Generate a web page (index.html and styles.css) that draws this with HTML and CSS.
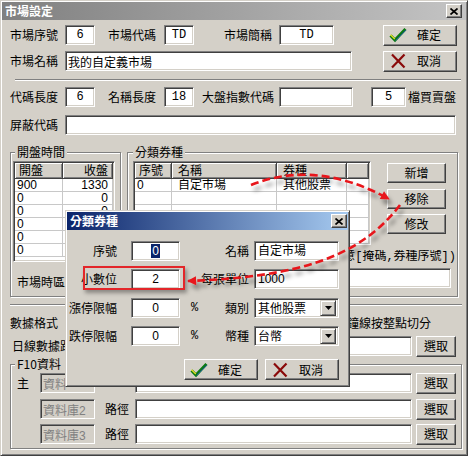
FILE: index.html
```html
<!DOCTYPE html>
<html>

<head>
    <title>市場設定</title>
    <meta charset='utf-8' />
    <link rel="stylesheet" href="styles.css">
</head>

<body>
    <div class="win">
        <div class="cap">
            <span>市場設定</span>
            <span class="xbtn"><svg width="8" height="7" viewBox="0 0 8 7"><path d="M0.5 0.5L7.5 6.5M7.5 0.5L0.5 6.5" stroke="#000" stroke-width="1.7"/></svg></span>
        </div>

        <div class="main">
            <div class="row row1">
                <span class="lbl lbl-a">市場序號</span>
                <input class="fld ctr mono f-s" value="6">
                <span class="lbl lbl-b">市場代碼</span>
                <input class="fld ctr mono f-s" value="TD">
                <span class="lbl lbl-c">市場簡稱</span>
                <input class="fld ctr mono f-abbr" value="TD">
                <button class="btn btn-ico btn-top">
                    <svg class="ico" width="18" height="16" viewBox="0 0 18 16"><path d="M1.5 8.5L6 13L16.5 2" fill="none" stroke="#0b7a12" stroke-width="3"/><path d="M1.5 7.8L5.8 12" stroke="#e8e020" stroke-width="1.2"/><path d="M6.5 13.5L16.8 3" stroke="#2050c0" stroke-width="0.8"/></svg>
                    <span>確定</span>
                </button>
            </div>
            <div class="row row2">
                <span class="lbl lbl-a">市場名稱</span>
                <input class="fld f-name" value="我的自定義市場">
                <button class="btn btn-ico btn-top2">
                    <svg class="ico" width="18" height="16" viewBox="0 0 18 16"><path d="M3 1.5L15.5 14.5M15.5 1.5L3 14.5" stroke="#8a0a0a" stroke-width="2.2"/></svg>
                    <span>取消</span>
                </button>
            </div>

            <div class="sep sep-top"></div>

            <div class="row row3">
                <span class="lbl lbl-a">代碼長度</span>
                <input class="fld ctr mono f-s" value="6">
                <span class="lbl lbl-b">名稱長度</span>
                <input class="fld ctr mono f-s" value="18">
                <span class="lbl lbl-d">大盤指數代碼</span>
                <input class="fld f-index" value="">
                <input class="fld ctr mono f-depth" value="5">
                <span class="lbl lbl-e">檔買賣盤</span>
            </div>
            <div class="row row4">
                <span class="lbl lbl-a">屏蔽代碼</span>
                <input class="fld f-mask" value="">
            </div>

            <div class="groups">
                <div class="grp g-open">
                    <span class="legend">開盤時間</span>
                    <div class="lv lv-open">
                        <div class="lh"><span class="hd c-o">開盤</span><span class="hd c-c rt">收盤</span></div>
                        <div class="lr"><span class="lc c-o">900</span><span class="lc c-c rt">1330</span></div>
                        <div class="lr"><span class="lc c-o">0</span><span class="lc c-c rt">0</span></div>
                        <div class="lr"><span class="lc c-o">0</span><span class="lc c-c rt">0</span></div>
                        <div class="lr"><span class="lc c-o">0</span><span class="lc c-c"></span></div>
                        <div class="lr"><span class="lc c-o">0</span><span class="lc c-c"></span></div>
                        <div class="lr"><span class="lc c-o">0</span><span class="lc c-c"></span></div>
                    </div>
                    <span class="lbl tz">市場時區</span>
                </div>

                <div class="grp g-type">
                    <span class="legend">分類券種</span>
                    <div class="g-top">
                        <div class="lv lv-type">
                            <div class="lh"><span class="hd c-no">序號</span><span class="hd c-nm">名稱</span><span class="hd c-kd">券種</span><span class="hd c-fill"></span></div>
                            <div class="lr"><span class="lc c-no">0</span><span class="lc c-nm">自定市場</span><span class="lc c-kd">其他股票</span><span class="lc c-fill"></span></div>
                            <div class="lr"><span class="lc c-no"></span><span class="lc c-nm"></span><span class="lc c-kd"></span><span class="lc c-fill"></span></div>
                            <div class="lr"><span class="lc c-no"></span><span class="lc c-nm"></span><span class="lc c-kd"></span><span class="lc c-fill"></span></div>
                            <div class="lr"><span class="lc c-no"></span><span class="lc c-nm"></span><span class="lc c-kd"></span><span class="lc c-fill"></span></div>
                            <div class="lr"><span class="lc c-no"></span><span class="lc c-nm"></span><span class="lc c-kd"></span><span class="lc c-fill"></span></div>
                        </div>
                        <div class="side">
                            <button class="btn btn-side">新增</button>
                            <button class="btn btn-side">移除</button>
                            <button class="btn btn-side">修改</button>
                        </div>
                    </div>
                    <div class="note">意[掩碼,券種序號])</div>
                    <input class="fld f-rule" value="">
                </div>
            </div>

            <div class="sep sep-mid"></div>

            <div class="row row-fmt">
                <span class="lbl">數據格式</span>
                <span class="lbl chk-txt">鐘線按整點切分</span>
            </div>
            <div class="row row-day">
                <span class="lbl lbl-day">日線數據路</span>
                <input class="fld f-path" value="">
                <button class="btn btn-pick">選取</button>
            </div>

            <div class="grp g-f10">
                <span class="legend">F10資料</span>
                <div class="row f10-row">
                    <span class="lbl lbl-main">主</span>
                    <input class="fld f-db" value="資料" disabled>
                    <span class="lbl lbl-path"></span>
                    <input class="fld f-dbpath" value="">
                    <button class="btn btn-pick">選取</button>
                </div>
                <div class="row f10-row">
                    <span class="lbl lbl-main"></span>
                    <input class="fld f-db" value="資料庫2" disabled>
                    <span class="lbl lbl-path">路徑</span>
                    <input class="fld f-dbpath" value="">
                    <button class="btn btn-pick">選取</button>
                </div>
                <div class="row f10-row">
                    <span class="lbl lbl-main"></span>
                    <input class="fld f-db" value="資料庫3" disabled>
                    <span class="lbl lbl-path">路徑</span>
                    <input class="fld f-dbpath" value="">
                    <button class="btn btn-pick">選取</button>
                </div>
            </div>
        </div>

        <!-- 彈出視窗：分類券種 -->
        <div class="dlg">
            <div class="cap cap-active">
                <span>分類券種</span>
                <span class="xbtn"><svg width="8" height="7" viewBox="0 0 8 7"><path d="M0.5 0.5L7.5 6.5M7.5 0.5L0.5 6.5" stroke="#000" stroke-width="1.7"/></svg></span>
            </div>
            <div class="drow d1">
                <span class="dl1">序號</span>
                <div class="fld dfld ctr"><span class="sel">0</span></div>
                <div class="mid"><span class="dl2">名稱</span></div>
                <div class="fld dwide">自定市場</div>
            </div>
            <div class="drow d2">
                <span class="dl1">小數位</span>
                <div class="fld dfld ctr">2</div>
                <div class="mid"><span class="dl2">每張單位</span></div>
                <div class="fld dwide">1000</div>
            </div>
            <div class="drow d3">
                <span class="dl1">漲停限幅</span>
                <div class="fld dfld ctr">0</div>
                <div class="mid"><span class="pct">%</span><span class="dl2">類別</span></div>
                <div class="fld dwide combo"><span>其他股票</span><span class="drop"><svg width="7" height="4" viewBox="0 0 7 4"><path d="M0 0H7L3.5 4z"/></svg></span></div>
            </div>
            <div class="drow d4">
                <span class="dl1">跌停限幅</span>
                <div class="fld dfld ctr">0</div>
                <div class="mid"><span class="pct">%</span><span class="dl2">幣種</span></div>
                <div class="fld dwide combo"><span>台幣</span><span class="drop"><svg width="7" height="4" viewBox="0 0 7 4"><path d="M0 0H7L3.5 4z"/></svg></span></div>
            </div>
            <div class="dbtns">
                <button class="btn btn-ico dbtn-ok">
                    <svg class="ico" width="18" height="16" viewBox="0 0 18 16"><path d="M1.5 8.5L6 13L16.5 2" fill="none" stroke="#0b7a12" stroke-width="3"/><path d="M1.5 7.8L5.8 12" stroke="#e8e020" stroke-width="1.2"/><path d="M6.5 13.5L16.8 3" stroke="#2050c0" stroke-width="0.8"/></svg>
                    <span>確定</span>
                </button>
                <button class="btn btn-ico dbtn-no">
                    <svg class="ico" width="18" height="16" viewBox="0 0 18 16"><path d="M3 1.5L15.5 14.5M15.5 1.5L3 14.5" stroke="#8a0a0a" stroke-width="2.2"/></svg>
                    <span>取消</span>
                </button>
            </div>
        </div>

        <!-- 標註 -->
        <div class="mark"></div>
        <svg class="arrows" width="468" height="456" viewBox="0 0 468 456">
            <defs>
                <filter id="sh" x="-20%" y="-50%" width="140%" height="200%">
                    <feDropShadow dx="3" dy="5" stdDeviation="2.2" flood-color="#000" flood-opacity="0.4"/>
                </filter>
                <marker id="ah" viewBox="0 0 10 10" refX="9" refY="5" markerWidth="10" markerHeight="9" markerUnits="userSpaceOnUse" orient="auto">
                    <path d="M0 0L10 5L0 10z" fill="#e8161b"/>
                </marker>
            </defs>
            <g filter="url(#sh)" fill="none" stroke="#e8161b" stroke-width="2.6" stroke-dasharray="8 4">
                <path d="M250 184Q315 158 388 198" marker-end="url(#ah)"/>
                <path d="M399 204C360 255 300 276 187 280" marker-end="url(#ah)"/>
            </g>
        </svg>
    </div>
</body>

</html>
```

FILE: styles.css
```css
* {
    box-sizing: border-box;
}

body {
    margin: 0;
    background: #d4d0c8;
    font: 12px/14px "Noto Sans CJK TC", "Liberation Sans", sans-serif;
    color: #000;
}

/* 視窗外框 */
.win {
    position: relative;
    width: 468px;
    height: 456px;
    border: 1px solid;
    border-color: #d4d0c8 #404040 #404040 #d4d0c8;
    box-shadow: inset 1px 1px #fff, inset -1px -1px #808080;
    padding: 1px;
    background: #d4d0c8;
    overflow: hidden;
}

.cap {
    display: flex;
    align-items: center;
    height: 18px;
    padding: 0 4px 0 3px;
    background: linear-gradient(to right, #808080, #c4c4c4);
    color: #fff;
    font-weight: bold;
}

.cap-active {
    background: linear-gradient(to right, #0a246a, #a6caf0);
    padding-right: 1px;
}

.xbtn {
    margin-left: auto;
    width: 16px;
    height: 14px;
    display: flex;
    align-items: center;
    justify-content: center;
    background: #d4d0c8;
    border: 1px solid;
    border-color: #fff #404040 #404040 #fff;
    box-shadow: inset -1px -1px #808080;
}

.main {
    padding: 5px 0 0 8px;
}

.row {
    display: flex;
    align-items: center;
    height: 20px;
}

.lbl {
    flex: none;
    white-space: nowrap;
}

/* 輸入框 */
.fld {
    flex: none;
    height: 20px;
    margin: 0;
    padding: 0 2px;
    border: 1px solid;
    border-color: #808080 #fff #fff #808080;
    box-shadow: inset 1px 1px #404040, inset -1px -1px #d4d0c8;
    background: #fff;
    font: 12px/18px "Liberation Sans", "Noto Sans CJK TC", sans-serif;
    color: #000;
    outline: none;
}

.fld:disabled {
    background: #d4d0c8;
    color: #808080;
}

.ctr {
    text-align: center;
    padding: 0;
}

.mono {
    font-family: "Liberation Mono", monospace;
}

.btn {
    flex: none;
    height: 20px;
    margin: 0;
    padding: 0;
    display: flex;
    align-items: center;
    justify-content: center;
    border: 1px solid;
    border-color: #fff #404040 #404040 #fff;
    box-shadow: inset -1px -1px #808080;
    background: #d4d0c8;
    font: 12px/14px "Noto Sans CJK TC", sans-serif;
    color: #000;
}

.btn-ico {
    justify-content: flex-start;
    padding-left: 5px;
    width: 74px;
    height: 21px;
}

.btn-ico span {
    margin-left: 10px;
}

.ico {
    flex: none;
}

.lbl-a { width: 55px; }
.lbl-b { width: 56px; margin-left: 13px; }
.lbl-c { width: 55px; margin-left: 30px; }
.lbl-d { width: 77px; margin-left: 8px; }
.lbl-e { margin-left: 2px; }

.f-s { width: 30px; }
.f-abbr { width: 55px; }
.f-name { width: 287px; }
.f-index { width: 74px; }
.f-depth { width: 35px; margin-left: 18px; }
.f-mask { width: 391px; }

.btn-top { margin-left: 49px; }
.btn-top2 { margin-left: 31px; }

.row2 { margin-top: 6px; }
.row3 { margin-top: 6px; }
.row4 { margin-top: 8px; }

.sep {
    height: 2px;
    border-top: 1px solid #808080;
    border-bottom: 1px solid #fff;
}

.sep-top {
    width: 446px;
    margin: 8px 0 0 5px;
}

.sep-mid {
    width: 452px;
    margin-top: 7px;
}

/* 群組框 */
.groups {
    display: flex;
    margin-top: 17px;
    height: 145px;
}

.grp {
    display: flex;
    flex-direction: column;
    border: 1px solid #808080;
    box-shadow: inset 1px 1px #fff, 1px 1px #fff;
}

.legend {
    align-self: flex-start;
    height: 14px;
    margin-top: -8px;
    padding: 0 2px;
    background: #d4d0c8;
}

.g-open {
    width: 111px;
    padding-left: 2px;
}

.g-open .legend {
    margin-left: 2px;
}

.g-type {
    width: 331px;
    margin-left: 6px;
    padding: 0 1px 0 5px;
}

.tz {
    margin: 13px 0 0 4px;
}

/* 清單 */
.lv {
    flex: none;
    margin-top: 2px;
    padding: 1px;
    border: 1px solid;
    border-color: #808080 #fff #fff #808080;
    box-shadow: inset 1px 1px #404040, inset -1px -1px #d4d0c8;
    background: #fff;
    overflow: hidden;
}

.lv-open {
    width: 102px;
    height: 101px;
}

.lv-type {
    width: 238px;
    height: 84px;
}

.lh,
.lr {
    display: flex;
}

.hd {
    flex: none;
    height: 16px;
    padding: 0 4px;
    line-height: 14px;
    background: #d4d0c8;
    border-right: 1px solid #404040;
    border-bottom: 1px solid #404040;
    box-shadow: inset 1px 1px #fff, inset -1px -1px #808080;
}

.lc {
    flex: none;
    height: 13px;
    padding: 0 2px;
    line-height: 13px;
    border-right: 1px solid #c8c8c8;
    border-bottom: 1px solid #c8c8c8;
    font-family: "Liberation Sans", "Noto Sans CJK TC", sans-serif;
    overflow: hidden;
}

.rt {
    text-align: right;
    padding-right: 4px;
}

.c-o { width: 48px; }
.c-c { width: 50px; }
.c-no { width: 37px; }
.c-nm { width: 105px; padding-left: 6px; }
.c-kd { width: 70px; padding-left: 6px; }
.c-fill { width: 22px; }

.g-top {
    display: flex;
}

.side {
    display: flex;
    flex-direction: column;
    margin: 4px 0 0 16px;
}

.btn-side {
    width: 59px;
}

.btn-side + .btn-side {
    margin-top: 6px;
}

.btn-side:last-child {
    margin-top: 5px;
}

/* 說明文字前段被彈出視窗遮住 */
.note {
    margin-top: 5px;
    height: 14px;
    text-align: right;
    white-space: nowrap;
    font-family: "Liberation Mono", "Noto Sans CJK TC", monospace;
    overflow: hidden;
}

.f-rule {
    width: 318px;
    margin-top: 4px;
}

/* 下方 */
.row-fmt {
    margin-top: 10px;
    height: 14px;
}

.chk-txt {
    margin-left: 289px;
}

.row-day {
    margin-top: 6px;
}

.lbl-day {
    width: 76px;
    margin-left: 2px;
}

.f-path {
    width: 324px;
}

.btn-pick {
    width: 40px;
    margin-left: 4px;
    height: 21px;
}

.g-f10 {
    width: 452px;
    height: 85px;
    margin-top: 8px;
    padding-left: 6px;
}

.g-f10 .legend {
    margin-left: -2px;
    width: 51px;
}

.f10-row {
    margin-top: 6px;
}

.g-f10 .legend + .f10-row {
    margin-top: 2px;
}

.f10-row:last-child {
    margin-top: 5px;
}

.lbl-main { width: 23px; }
.f-db { width: 55px; }
.lbl-path { width: 30px; margin-left: 10px; }
.f-dbpath { width: 277px; }

/* 彈出視窗 */
.dlg {
    position: absolute;
    left: 64px;
    top: 209px;
    width: 285px;
    height: 177px;
    padding: 1px;
    border: 1px solid;
    border-color: #d4d0c8 #404040 #404040 #d4d0c8;
    box-shadow: inset 1px 1px #fff, inset -1px -1px #808080;
    background: #d4d0c8;
}

.drow {
    display: flex;
    align-items: center;
    height: 20px;
    margin-top: 8px;
}

.d1 { margin-top: 11px; }
.d3 { margin-top: 9px; }

.dl1 {
    flex: none;
    width: 50px;
    text-align: right;
    white-space: nowrap;
}

.dfld {
    width: 49px;
    margin-left: 14px;
}

.dwide {
    width: 85px;
    margin-left: 5px;
    padding-left: 3px;
}

.mid {
    flex: none;
    width: 69px;
    display: flex;
    padding-left: 11px;
}

.dl2 {
    margin-left: auto;
}

.pct {
    font-family: "Liberation Mono", monospace;
}

.sel {
    background: #0a246a;
    color: #fff;
    padding: 0 1px;
}

.combo {
    display: flex;
    align-items: center;
    padding-right: 2px;
    font-family: "Noto Sans CJK TC", sans-serif;
}

.drop {
    margin-left: auto;
    width: 16px;
    height: 16px;
    display: flex;
    align-items: center;
    justify-content: center;
    background: #d4d0c8;
    border: 1px solid;
    border-color: #d4d0c8 #404040 #404040 #d4d0c8;
    box-shadow: inset 1px 1px #fff, inset -1px -1px #808080;
}

.dbtns {
    display: flex;
    margin-top: 13px;
}

.dbtn-ok { margin-left: 117px; }
.dbtn-no { margin-left: 7px; }

/* 紅色標註 */
.mark {
    position: absolute;
    left: 82px;
    top: 265px;
    width: 102px;
    height: 24px;
    border: 2px solid #e3262a;
    box-shadow: 2px 3px 4px rgba(0, 0, 0, 0.35);
}

.arrows {
    position: absolute;
    left: 0;
    top: 0;
    pointer-events: none;
}
```
